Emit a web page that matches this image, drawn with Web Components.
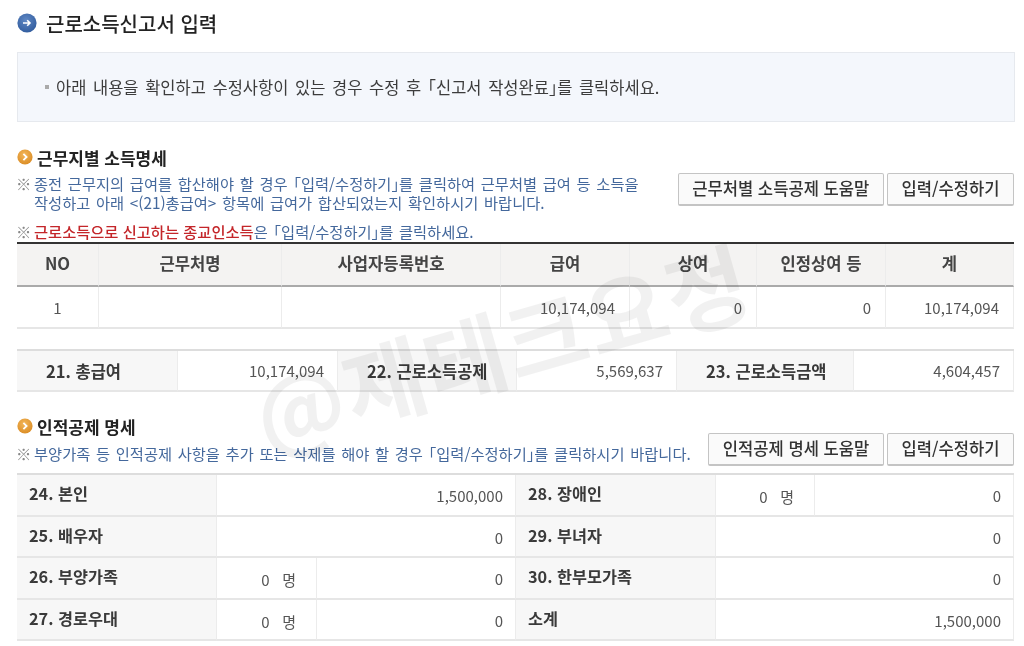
<!DOCTYPE html>
<html lang="ko">
<head>
<meta charset="utf-8">
<title>근로소득신고서 입력</title>
<style>
  html, body { margin: 0; background: #fff; }
</style>
</head>
<body>
<tax-page>
  <tax-title>근로소득신고서 입력</tax-title>
  <tax-notice>아래 내용을 확인하고 수정사항이 있는 경우 수정 후 <span>「</span>신고서 작성완료<span>」</span>를 클릭하세요.</tax-notice>

  <tax-section heading="근무지별 소득명세" style="--section-top:26px;--notes-top:6px;--actions-top:5px">
    <tax-note>종전 근무지의 급여를 합산해야 할 경우 <span>「</span>입력/수정하기<span>」</span>를 클릭하여 근무처별 급여 등 소득을<br>작성하고 아래 &lt;(21)총급여&gt; 항목에 급여가 합산되었는지 확인하시기 바랍니다.</tax-note>
    <tax-button slot="actions">근무처별 소득공제 도움말</tax-button>
    <tax-button slot="actions">입력/수정하기</tax-button>
    <tax-note slot="extra"><b>근로소득으로 신고하는 종교인소득</b>은 <span>「</span>입력/수정하기<span>」</span>를 클릭하세요.</tax-note>
  </tax-section>

  <tax-grid columns="82px 183px 219px 129px 127px 129px 128px" edge="strong" style="--grid-top:1px;--row:42px">
    <tax-cell kind="head">NO</tax-cell>
    <tax-cell kind="head">근무처명</tax-cell>
    <tax-cell kind="head">사업자등록번호</tax-cell>
    <tax-cell kind="head">급여</tax-cell>
    <tax-cell kind="head">상여</tax-cell>
    <tax-cell kind="head">인정상여 등</tax-cell>
    <tax-cell kind="head">계</tax-cell>
    <tax-cell kind="center">1</tax-cell>
    <tax-cell></tax-cell>
    <tax-cell></tax-cell>
    <tax-cell>10,174,094</tax-cell>
    <tax-cell>0</tax-cell>
    <tax-cell>0</tax-cell>
    <tax-cell>10,174,094</tax-cell>
  </tax-grid>

  <tax-grid columns="161px 160px 179px 160px 177px 160px" style="--grid-top:20px;--row:41px;--pad:13px">
    <tax-cell kind="total">21. 총급여</tax-cell>
    <tax-cell>10,174,094</tax-cell>
    <tax-cell kind="total">22. 근로소득공제</tax-cell>
    <tax-cell>5,569,637</tax-cell>
    <tax-cell kind="total">23. 근로소득금액</tax-cell>
    <tax-cell>4,604,457</tax-cell>
  </tax-grid>

  <tax-section heading="인적공제 명세" style="--section-top:25px;--notes-top:7px;--actions-top:-4px">
    <tax-note>부양가족 등 인적공제 사항을 추가 또는 삭제를 해야 할 경우 <span>「</span>입력/수정하기<span>」</span>를 클릭하시기 바랍니다.</tax-note>
    <tax-button slot="actions">인적공제 명세 도움말</tax-button>
    <tax-button slot="actions">입력/수정하기</tax-button>
  </tax-section>

  <tax-grid columns="200px 100px 199px 200px 99px 199px" style="--row:41.5px;--grid-top:7px;--pad:12px;--num-top:2px">
    <tax-cell kind="label">24. 본인</tax-cell>
    <tax-cell span="2">1,500,000</tax-cell>
    <tax-cell kind="label">28. 장애인</tax-cell>
    <tax-cell kind="count">0&nbsp;&nbsp;&nbsp;명</tax-cell>
    <tax-cell>0</tax-cell>

    <tax-cell kind="label">25. 배우자</tax-cell>
    <tax-cell span="2">0</tax-cell>
    <tax-cell kind="label">29. 부녀자</tax-cell>
    <tax-cell span="2">0</tax-cell>

    <tax-cell kind="label">26. 부양가족</tax-cell>
    <tax-cell kind="count">0&nbsp;&nbsp;&nbsp;명</tax-cell>
    <tax-cell>0</tax-cell>
    <tax-cell kind="label">30. 한부모가족</tax-cell>
    <tax-cell span="2">0</tax-cell>

    <tax-cell kind="label">27. 경로우대</tax-cell>
    <tax-cell kind="count">0&nbsp;&nbsp;&nbsp;명</tax-cell>
    <tax-cell>0</tax-cell>
    <tax-cell kind="label">소계</tax-cell>
    <tax-cell span="2">1,500,000</tax-cell>
  </tax-grid>

  <tax-watermark>@제테크요정</tax-watermark>
</tax-page>

<script>
const FONT = '"Noto Sans CJK KR", "Noto Sans", sans-serif';

class TaxPage extends HTMLElement {
  constructor() {
    super();
    this.attachShadow({ mode: 'open' });
    this.shadowRoot.innerHTML = `
      <style>
        :host {
          display: flex;
          flex-direction: column;
          position: relative;
          box-sizing: border-box;
          width: 1024px;
          height: 646px;
          padding: 0 10px 0 17px;
          overflow: hidden;
          font-family: ${FONT};
          color: #333;
          filter: blur(0.4px);
        }
      </style>
      <slot></slot>
    `;
  }
}

class TaxTitle extends HTMLElement {
  constructor() {
    super();
    this.attachShadow({ mode: 'open' });
    this.shadowRoot.innerHTML = `
      <style>
        :host {
          display: flex;
          align-items: center;
          gap: 9px;
          height: 46px;
          margin-bottom: 6px;
          font-size: 20px;
          font-weight: 500;
          color: #222;
        }
        svg { width: 20px; height: 20px; flex: none; }
      </style>
      <svg viewBox="0 0 20 20">
        <defs>
          <radialGradient id="b" cx="45%" cy="35%" r="70%">
            <stop offset="0" stop-color="#5f88c4"/>
            <stop offset="1" stop-color="#2f5a9c"/>
          </radialGradient>
        </defs>
        <circle cx="10" cy="10" r="9.6" fill="url(#b)"/>
        <path d="M6 10h7M10.2 7.2 13 10l-2.8 2.8" fill="none" stroke="#fff" stroke-width="1.6"/>
      </svg>
      <slot></slot>
    `;
  }
}

class TaxNotice extends HTMLElement {
  constructor() {
    super();
    this.attachShadow({ mode: 'open' });
    this.shadowRoot.innerHTML = `
      <style>
        :host {
          display: flex;
          align-items: center;
          box-sizing: border-box;
          height: 70px;
          width: 998px;
          padding: 0 0 0 27px;
          gap: 7px;
          background: #f4f7fc;
          border: 1px solid #e6e9ee;
          font-size: 16.5px;
          word-spacing: 2px;
          color: #3c3c3c;
        }
        i { width: 4px; height: 4px; background: #aaa; }
        ::slotted(span) { font-feature-settings: "halt"; }
      </style>
      <i></i><span><slot></slot></span>
    `;
  }
}

class TaxSection extends HTMLElement {
  constructor() {
    super();
    this.attachShadow({ mode: 'open' });
    this.shadowRoot.innerHTML = `
      <style>
        :host {
          display: block;
          margin-top: var(--section-top, 26px);
        }
        .head {
          display: flex;
          align-items: center;
          gap: 4px;
          height: 20px;
          font-size: 17px;
          font-weight: 700;
          color: #222;
        }
        .head span { margin-bottom: 2px; }
        svg { width: 16px; height: 16px; flex: none; margin-bottom: 3px; }
        .body {
          display: flex;
          justify-content: space-between;
          align-items: flex-start;
        }
        .notes { padding-top: var(--notes-top, 6px); }
        .actions {
          display: flex;
          gap: 3px;
          margin-top: var(--actions-top, 5px);
        }
        ::slotted([slot=extra]) { margin-top: 10px; }
      </style>
      <div class="head">
        <svg viewBox="0 0 16 16">
          <defs>
            <radialGradient id="o" cx="45%" cy="35%" r="70%">
              <stop offset="0" stop-color="#f3b75a"/>
              <stop offset="1" stop-color="#d98a22"/>
            </radialGradient>
          </defs>
          <circle cx="8" cy="8" r="7.6" fill="url(#o)"/>
          <path d="M6.4 4.8 9.6 8l-3.2 3.2" fill="none" stroke="#fff" stroke-width="1.8"/>
        </svg>
        <span id="h"></span>
      </div>
      <div class="body">
        <div class="notes"><slot></slot></div>
        <div class="actions"><slot name="actions"></slot></div>
      </div>
      <slot name="extra"></slot>
    `;
  }

  connectedCallback() {
    this.shadowRoot.getElementById('h').textContent = this.getAttribute('heading');
  }
}

class TaxNote extends HTMLElement {
  constructor() {
    super();
    this.attachShadow({ mode: 'open' });
    this.shadowRoot.innerHTML = `
      <style>
        :host {
          display: grid;
          grid-template-columns: 17px auto;
          font-size: 15.3px;
          line-height: 19px;
          word-spacing: 1.4px;
          color: #44689c;
          white-space: nowrap;
        }
        .mark { color: #888; margin-left: -1px; }
        ::slotted(b) { color: #c4262a; font-weight: 500; word-spacing: 0; }
        ::slotted(span) { font-feature-settings: "halt"; }
      </style>
      <span class="mark">※</span>
      <span><slot></slot></span>
    `;
  }
}

class TaxButton extends HTMLElement {
  constructor() {
    super();
    this.attachShadow({ mode: 'open' });
    this.shadowRoot.innerHTML = `
      <style>
        :host {
          display: block;
          box-sizing: border-box;
          height: 33px;
          padding: 0 13.5px;
          border: 1px solid #c4c4c4;
          border-bottom-width: 2px;
          border-radius: 2px;
          background: #fafafa;
          font-size: 16.6px;
          font-weight: 500;
          line-height: 29px;
          color: #333;
          white-space: nowrap;
        }
      </style>
      <slot></slot>
    `;
  }
}

class TaxGrid extends HTMLElement {
  constructor() {
    super();
    this.attachShadow({ mode: 'open' });
    this.shadowRoot.innerHTML = `
      <style>
        :host {
          display: grid;
          width: 997px;
          margin-top: var(--grid-top, 0);
          border-top: 2px solid #ddd;
        }
        :host([edge=strong]) { border-top-color: #333; }
      </style>
      <slot></slot>
    `;
  }

  connectedCallback() {
    this.style.gridTemplateColumns = this.getAttribute('columns');
  }
}

class TaxCell extends HTMLElement {
  constructor() {
    super();
    this.attachShadow({ mode: 'open' });
    this.shadowRoot.innerHTML = `
      <style>
        :host {
          display: flex;
          align-items: center;
          justify-content: flex-end;
          box-sizing: border-box;
          height: var(--row, 41px);
          padding: var(--num-top, 0) var(--pad, 14px) 0 0;
          border-right: 1px solid #ececec;
          border-bottom: 2px solid #e6e6e6;
          font-size: 15px;
          color: #555;
          white-space: nowrap;
        }
        :host([kind=head]) {
          justify-content: center;
          height: 43px;
          padding: 0 0 3px;
          background: #f4f3f2;
          border-bottom-color: #aaa;
          font-size: 16.6px;
          font-weight: 700;
          color: #444;
        }
        :host([kind=center]) { justify-content: center; padding: 0; }
        :host([kind=total]) {
          justify-content: flex-start;
          padding: 0 0 0 29px;
          background: #f7f7f7;
          font-size: 16.5px;
          font-weight: 700;
          color: #3a3a3a;
        }
        :host([kind=label]) {
          justify-content: flex-start;
          padding: 0 0 3px 12px;
          background: #f7f7f7;
          font-size: 16.3px;
          font-weight: 700;
          color: #3a3a3a;
        }
        :host([kind=count]) { padding-top: 4px; padding-right: 20px; }
      </style>
      <slot></slot>
    `;
  }

  connectedCallback() {
    const span = this.getAttribute('span');
    if (span) this.style.gridColumn = 'span ' + span;
  }
}

class TaxWatermark extends HTMLElement {
  constructor() {
    super();
    this.attachShadow({ mode: 'open' });
    this.shadowRoot.innerHTML = `
      <style>
        :host {
          position: absolute;
          left: 246px;
          top: 295px;
          font-size: 89px;
          font-weight: 700;
          line-height: 100px;
          letter-spacing: 2px;
          color: rgba(0, 0, 0, 0.055);
          white-space: nowrap;
          pointer-events: none;
          transform: rotate(-16deg);
        }
      </style>
      <slot></slot>
    `;
  }
}

customElements.define('tax-page', TaxPage);
customElements.define('tax-title', TaxTitle);
customElements.define('tax-notice', TaxNotice);
customElements.define('tax-section', TaxSection);
customElements.define('tax-note', TaxNote);
customElements.define('tax-button', TaxButton);
customElements.define('tax-grid', TaxGrid);
customElements.define('tax-cell', TaxCell);
customElements.define('tax-watermark', TaxWatermark);
</script>
</body>
</html>
